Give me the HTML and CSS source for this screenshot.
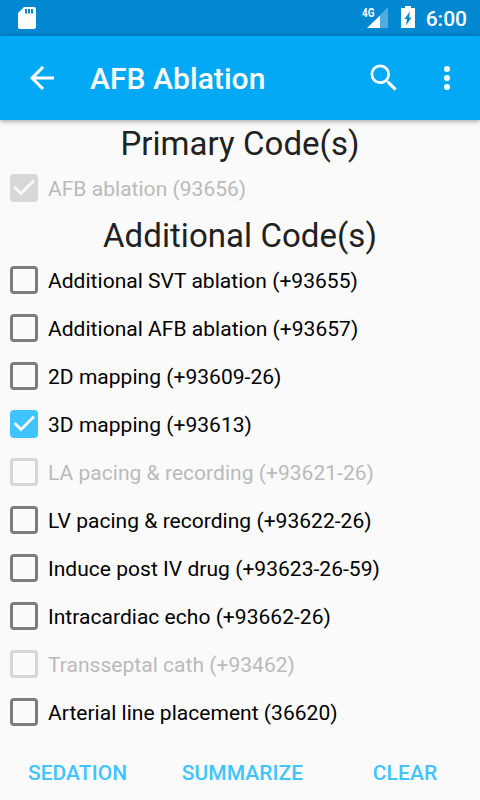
FILE: index.html
```html
<!DOCTYPE html>
<html lang="en"><head><meta charset="utf-8"><title>AFB Ablation</title><link rel="stylesheet" href="styles.css"></head>
<body>
<div class="status">
<svg class="sd" width="18" height="22" viewBox="0 0 18 22"><path fill="#fff" fill-rule="evenodd" d="M6 0h10a2 2 0 0 1 2 2v18a2 2 0 0 1-2 2H2a2 2 0 0 1-2-2V6zM7 2v4.500h2V2zm3 0v4.500h2V2zm3 0v4.500h2V2z"/></svg>
<svg class="signal" width="27" height="21" viewBox="0 0 27 21"><path fill="#fff" fill-opacity=".3" d="M26 0v21H18V8z"/><path fill="#fff" d="M18 8.500V21H5z"/><text x="0" y="9.500" textLength="12.500" lengthAdjust="spacingAndGlyphs">4G</text></svg>
<svg class="battery" width="14" height="22" viewBox="0 0 14 22"><path fill="#fff" fill-rule="evenodd" d="M4 0h6v2h4v20H0V2h4zM9 5.500l-5.500 7.500h2.500l-1 6.500 5.500-8H8z"/></svg>
<span class="clock">6:00</span>
</div>
<header class="bar">
<svg class="back" width="36" height="36" viewBox="0 0 24 24"><path fill="none" stroke="#fff" stroke-width="2" d="M20 12H5.400M12.700 4.700L5.400 12l7.300 7.300"/></svg>
<h1>AFB Ablation</h1>
<svg class="search" width="36" height="36" viewBox="0 0 24 24"><path fill="#fff" d="M15.500 14h-.79l-.28-.27A6.470 6.470 0 0 0 16 9.500 6.500 6.500 0 1 0 9.500 16c1.610 0 3.090-.59 4.230-1.570l.27.28v.79l5 4.990L20.490 19zm-6 .15a4.650 4.650 0 1 1 0-9.300 4.650 4.650 0 0 1 0 9.300z"/></svg>
<svg class="more" width="36" height="36" viewBox="0 0 24 24"><g fill="#fff"><circle cx="12" cy="6" r="2"/><circle cx="12" cy="12" r="2"/><circle cx="12" cy="18" r="2"/></g></svg>
</header>
<main>
<h2>Primary Code(s)</h2>
<div class="row off"><i class="box on"><svg viewBox="0 0 28 28"><path d="M4.500 13l6.500 6.500L24 6.500"/></svg></i><span>AFB ablation (93656)</span></div>
<h2>Additional Code(s)</h2>
<div class="row"><i class="box"></i><span>Additional SVT ablation (+93655)</span></div>
<div class="row"><i class="box"></i><span>Additional AFB ablation (+93657)</span></div>
<div class="row"><i class="box"></i><span>2D mapping (+93609-26)</span></div>
<div class="row"><i class="box on"><svg viewBox="0 0 28 28"><path d="M4.500 13l6.500 6.500L24 6.500"/></svg></i><span>3D mapping (+93613)</span></div>
<div class="row off"><i class="box"></i><span>LA pacing &amp; recording (+93621-26)</span></div>
<div class="row"><i class="box"></i><span>LV pacing &amp; recording (+93622-26)</span></div>
<div class="row"><i class="box"></i><span>Induce post IV drug (+93623-26-59)</span></div>
<div class="row"><i class="box"></i><span>Intracardiac echo (+93662-26)</span></div>
<div class="row off"><i class="box"></i><span>Transseptal cath (+93462)</span></div>
<div class="row"><i class="box"></i><span>Arterial line placement (36620)</span></div>
</main>
<footer><span>SEDATION</span><span>SUMMARIZE</span><span>CLEAR</span></footer>
</body></html>
```
FILE: styles.css
```css
*{box-sizing:border-box}
body{margin:0;width:480px;height:800px;overflow:hidden;background:#fafafa;font-family:Roboto,sans-serif;color:#000;display:flex;flex-direction:column}
svg{display:block;flex:none}
.status{height:36px;flex:none;background:#0288d1;color:#fff;display:flex;align-items:flex-start;padding:7px 13px 0 18px}
.signal{margin-left:auto;overflow:visible}
.signal text{font-size:13.5px;font-weight:700;fill:#fff}
.battery{margin:-1px 0 0 12px}
.clock{font-size:21px;font-weight:500;line-height:24px;margin-left:11px}
.bar{height:84px;flex:none;background:#03a9f4;color:#fff;display:flex;align-items:center;padding:0 15px 0 24px;box-shadow:0 1px 5px rgba(0,0,0,.4);z-index:1}
h1{margin:0 auto 0 30px;padding-top:2px;font-size:30px;font-weight:500;line-height:36px;letter-spacing:.06px}
.more{margin-left:27px}
main{flex:1}
h2{margin:0;height:44px;line-height:48px;font-size:33px;font-weight:400;text-align:center;color:#212121;letter-spacing:.05px}
.row{height:48px;display:flex;align-items:center;font-size:21px;padding-left:10px}
.row span{margin-left:10px;padding-top:2px;white-space:nowrap;letter-spacing:.03px}
.box{width:28px;height:28px;border:3px solid #7c7c7c;border-radius:4px;flex:none}
.box.on{background:#40c4ff;border:0}
.box svg{width:28px;height:28px;fill:none;stroke:#fafafa;stroke-width:2.8}
.off span{color:#bababa}
.off .box{border-color:#d7d7d7}
.off .on{background:#d7d7d7}
footer{height:56px;display:grid;grid-template-columns:155px 175px 150px;color:#40c4ff;font-size:21px;font-weight:500;line-height:58px;letter-spacing:.05px}
footer span{text-align:center}
```
